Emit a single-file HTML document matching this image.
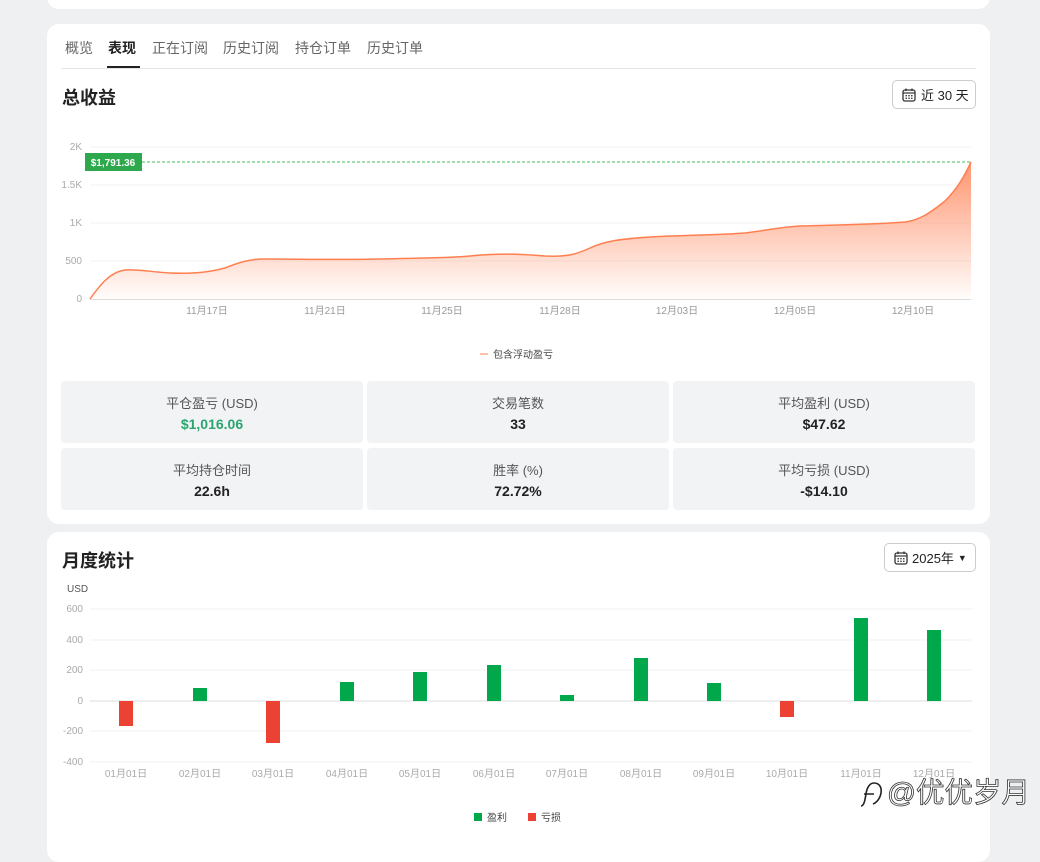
<!DOCTYPE html>
<html><head><meta charset="utf-8">
<style>
*{box-sizing:border-box;margin:0;padding:0}
body{width:1040px;height:841px;overflow:hidden;background:#eff0f2;font-family:"Liberation Sans","Noto Sans CJK SC",sans-serif;position:relative;color:#222}
.card{position:absolute;left:47px;width:943px;background:#fff;border-radius:12px}
.tabs{position:absolute;left:14px;top:0;right:14px;height:45px;border-bottom:1px solid #e3e4e6}
.tab{position:absolute;top:14px;font-size:14px;color:#666}
.tab.on{color:#222;font-weight:bold}
.ul{position:absolute;left:50px;top:42px;width:36px;height:2px;background:#222}
h2{position:absolute;font-size:18px;font-weight:bold;color:#222}
.btn{position:absolute;border:1px solid #ccc;border-radius:5px;font-size:13px;color:#222;display:flex;align-items:center;gap:5px;padding-left:9px}
.stat{position:absolute;width:302px;height:62px;background:#f2f3f5;border-radius:4px;text-align:center}
.stat .l{font-size:13px;color:#555;margin-top:12px}
.stat .v{font-size:14px;font-weight:bold;color:#222;margin-top:4px}
svg text{font-family:"Liberation Sans","Noto Sans CJK SC",sans-serif}
</style></head><body>
<div class="card" style="top:-20px;height:29px"></div>
<div class="card" style="top:24px;height:500px">
 <div class="tabs">
  <span class="tab" style="left:4px">概览</span>
  <span class="tab on" style="left:47px">表现</span>
  <span class="tab" style="left:91px">正在订阅</span>
  <span class="tab" style="left:162px">历史订阅</span>
  <span class="tab" style="left:234px">持仓订单</span>
  <span class="tab" style="left:306px">历史订单</span>
  <div class="ul" style="left:46px;width:33px"></div>
 </div>
 <h2 style="left:15px;top:60px">总收益</h2>
 <div class="btn" style="left:845px;top:56px;width:84px;height:29px"><svg width="14" height="14" viewBox="0 0 14 14"><rect x="1" y="2" width="12" height="11" rx="2" fill="none" stroke="#333" stroke-width="1.3"/><line x1="1" y1="5" x2="13" y2="5" stroke="#333" stroke-width="1.2"/><line x1="4" y1="0.5" x2="4" y2="3" stroke="#333" stroke-width="1.3"/><line x1="10" y1="0.5" x2="10" y2="3" stroke="#333" stroke-width="1.3"/><g fill="#333"><rect x="3.5" y="7" width="1.4" height="1.4"/><rect x="6.3" y="7" width="1.4" height="1.4"/><rect x="9.1" y="7" width="1.4" height="1.4"/><rect x="3.5" y="9.6" width="1.4" height="1.4"/><rect x="6.3" y="9.6" width="1.4" height="1.4"/><rect x="9.1" y="9.6" width="1.4" height="1.4"/></g></svg>近 30 天</div>
 <div class="stat" style="left:14px;top:357px"><div class="l">平仓盈亏 (USD)</div><div class="v" style="color:#2aa56f">$1,016.06</div></div>
 <div class="stat" style="left:320px;top:357px"><div class="l">交易笔数</div><div class="v">33</div></div>
 <div class="stat" style="left:626px;top:357px"><div class="l">平均盈利 (USD)</div><div class="v">$47.62</div></div>
 <div class="stat" style="left:14px;top:424px"><div class="l">平均持仓时间</div><div class="v">22.6h</div></div>
 <div class="stat" style="left:320px;top:424px"><div class="l">胜率 (%)</div><div class="v">72.72%</div></div>
 <div class="stat" style="left:626px;top:424px"><div class="l">平均亏损 (USD)</div><div class="v">-$14.10</div></div>
</div>
<div class="card" style="top:532px;height:330px">
 <h2 style="left:15px;top:15px">月度统计</h2>
 <div class="btn" style="left:837px;top:11px;width:92px;height:29px;gap:4px"><svg width="14" height="14" viewBox="0 0 14 14"><rect x="1" y="2" width="12" height="11" rx="2" fill="none" stroke="#333" stroke-width="1.3"/><line x1="1" y1="5" x2="13" y2="5" stroke="#333" stroke-width="1.2"/><line x1="4" y1="0.5" x2="4" y2="3" stroke="#333" stroke-width="1.3"/><line x1="10" y1="0.5" x2="10" y2="3" stroke="#333" stroke-width="1.3"/><g fill="#333"><rect x="3.5" y="7" width="1.4" height="1.4"/><rect x="6.3" y="7" width="1.4" height="1.4"/><rect x="9.1" y="7" width="1.4" height="1.4"/><rect x="3.5" y="9.6" width="1.4" height="1.4"/><rect x="6.3" y="9.6" width="1.4" height="1.4"/><rect x="9.1" y="9.6" width="1.4" height="1.4"/></g></svg>2025年<span style="font-size:9px">▼</span></div>
</div>
<svg style="position:absolute;left:0;top:0" width="1040" height="841">
 <defs><linearGradient id="g" x1="0" y1="0" x2="0" y2="1"><stop offset="0" stop-color="#ff8a60" stop-opacity="0.9"/><stop offset="1" stop-color="#ff8a60" stop-opacity="0.02"/></linearGradient></defs>
 <g stroke="#f3f3f3" stroke-width="1">
  <line x1="90" y1="147" x2="971" y2="147"/><line x1="90" y1="185" x2="971" y2="185"/><line x1="90" y1="223" x2="971" y2="223"/><line x1="90" y1="261" x2="971" y2="261"/>
 </g>
 <line x1="90" y1="299.5" x2="971" y2="299.5" stroke="#ddd"/>
 <g font-size="10" fill="#aaa" text-anchor="end">
  <text x="82" y="150">2K</text><text x="82" y="188">1.5K</text><text x="82" y="226">1K</text><text x="82" y="264">500</text><text x="82" y="302">0</text>
 </g>
 <path d="M90,299 C100,285 110,272 125,270 C140,269 150,272 170,273 C195,274 210,272 225,268 C240,262 250,259 265,259 C300,259 340,260 380,259 C420,258 450,258 470,256 C500,253 520,254 545,256 C565,257 575,255 590,248 C605,241 620,239 650,237 C690,235 720,235 745,233 C770,230 780,227 800,226 C840,225 880,224 905,222 C920,220 930,213 945,201 C958,188 965,175 971,162 L971,299 Z" fill="url(#g)"/>
 <path d="M90,299 C100,285 110,272 125,270 C140,269 150,272 170,273 C195,274 210,272 225,268 C240,262 250,259 265,259 C300,259 340,260 380,259 C420,258 450,258 470,256 C500,253 520,254 545,256 C565,257 575,255 590,248 C605,241 620,239 650,237 C690,235 720,235 745,233 C770,230 780,227 800,226 C840,225 880,224 905,222 C920,220 930,213 945,201 C958,188 965,175 971,162" fill="none" stroke="#ff7f50" stroke-width="1.5"/>
 <line x1="142" y1="162" x2="971" y2="162" stroke="#3cbf5a" stroke-dasharray="3,2"/>
 <rect x="85" y="153" width="57" height="18" fill="#2da84d"/>
 <text x="113" y="166" font-size="10" font-weight="bold" fill="#fff" text-anchor="middle">$1,791.36</text>
 <g font-size="10" fill="#999" text-anchor="middle">
  <text x="207" y="314">11月17日</text><text x="325" y="314">11月21日</text><text x="442" y="314">11月25日</text><text x="560" y="314">11月28日</text><text x="677" y="314">12月03日</text><text x="795" y="314">12月05日</text><text x="913" y="314">12月10日</text>
 </g>
 <line x1="480" y1="354" x2="488" y2="354" stroke="#ff7f50"/>
 <text x="493" y="358" font-size="10" fill="#444">包含浮动盈亏</text>
 <text x="67" y="592" font-size="10" fill="#555">USD</text>
 <g stroke="#f0f0f0"><line x1="90" y1="609" x2="972" y2="609"/><line x1="90" y1="640" x2="972" y2="640"/><line x1="90" y1="670" x2="972" y2="670"/><line x1="90" y1="731" x2="972" y2="731"/><line x1="90" y1="762" x2="972" y2="762"/></g>
 <line x1="90" y1="701" x2="972" y2="701" stroke="#ddd"/>
 <g font-size="10" fill="#aaa" text-anchor="end">
  <text x="83" y="612">600</text><text x="83" y="643">400</text><text x="83" y="673">200</text><text x="83" y="704">0</text><text x="83" y="734">-200</text><text x="83" y="765">-400</text>
 </g>
 <g fill="#00a84b">
  <rect x="193" y="688" width="14" height="13"/><rect x="340" y="682" width="14" height="19"/><rect x="413" y="672" width="14" height="29"/><rect x="487" y="665" width="14" height="36"/><rect x="560" y="695" width="14" height="6"/><rect x="634" y="658" width="14" height="43"/><rect x="707" y="683" width="14" height="18"/><rect x="854" y="618" width="14" height="83"/><rect x="927" y="630" width="14" height="71"/>
 </g>
 <g fill="#ec4233"><rect x="119" y="701" width="14" height="25"/><rect x="266" y="701" width="14" height="42"/><rect x="780" y="701" width="14" height="16"/></g>
 <g font-size="10" fill="#aaa" text-anchor="middle">
  <text x="126" y="777">01月01日</text><text x="200" y="777">02月01日</text><text x="273" y="777">03月01日</text><text x="347" y="777">04月01日</text><text x="420" y="777">05月01日</text><text x="494" y="777">06月01日</text><text x="567" y="777">07月01日</text><text x="641" y="777">08月01日</text><text x="714" y="777">09月01日</text><text x="787" y="777">10月01日</text><text x="861" y="777">11月01日</text><text x="934" y="777">12月01日</text>
 </g>
 <rect x="474" y="813" width="8" height="8" fill="#00a84b"/><text x="487" y="821" font-size="10" fill="#444">盈利</text>
 <rect x="528" y="813" width="8" height="8" fill="#ec4233"/><text x="541" y="821" font-size="10" fill="#444">亏损</text>
 <path d="M861,806 C864,806 865,800 866,794 C867,787 870,783 874,783 C879,783 882,787 881,793 C880,799 876,803 873,804 M864,794 L874,794" fill="none" stroke="#fff" stroke-width="4"/>
 <path d="M861,806 C864,806 865,800 866,794 C867,787 870,783 874,783 C879,783 882,787 881,793 C880,799 876,803 873,804 M864,794 L874,794" fill="none" stroke="#222" stroke-width="1.6"/>
 <text x="887" y="802" font-size="28" fill="#fff" stroke="#333" stroke-width="0.8" textLength="143" lengthAdjust="spacingAndGlyphs">@优优岁月</text>
</svg>
</body></html>
